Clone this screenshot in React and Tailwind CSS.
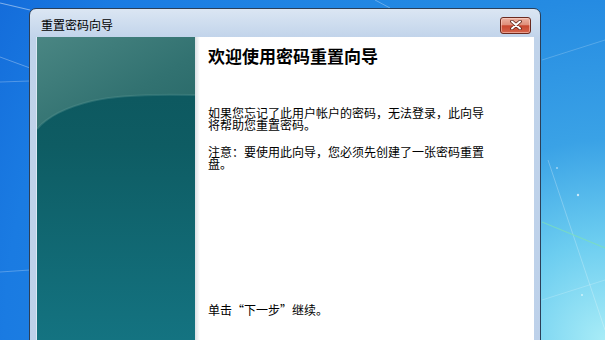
import React from "react";

const cjk = { fontFamily: '"Noto Sans CJK SC", "Noto Sans", sans-serif' };

const Desktop = () => (
  <svg className="absolute inset-0" width="605" height="340" viewBox="0 0 605 340">
    <g stroke="#ffffff" fill="none">
      <path d="M0 3 L30 10" strokeOpacity="0.45" strokeWidth="1.2" />
      <path d="M0 57 L30 68" strokeOpacity="0.3" />
      <path d="M0 82 L30 81" strokeOpacity="0.25" />
      <path d="M0 272 L30 270" strokeOpacity="0.25" />
      <path d="M375 0 L390 8" strokeOpacity="0.3" />
      <path d="M542 60 L605 40" strokeOpacity="0.2" />
      <path d="M548 160 L605 330" strokeOpacity="0.25" />
      <path d="M542 300 L605 280" strokeOpacity="0.2" />
    </g>
    <path d="M542 222 L605 248" stroke="#7ee0b8" strokeOpacity="0.7" strokeWidth="1.2" />
    <circle cx="578" cy="195" r="1.2" fill="#ffffff" fillOpacity="0.7" />
    <circle cx="582" cy="295" r="1" fill="#ffffff" fillOpacity="0.6" />
    <circle cx="557" cy="168" r="1" fill="#ffffff" fillOpacity="0.5" />
  </svg>
);

const TealArt = () => (
  <svg width="158" height="310" viewBox="0 0 158 310" className="block">
    <defs>
      <linearGradient id="deep" x1="0" y1="0" x2="0" y2="1">
        <stop offset="0" stopColor="#0c555c" />
        <stop offset="0.35" stopColor="#0e5c63" />
        <stop offset="1" stopColor="#147482" />
      </linearGradient>
      <linearGradient id="light" x1="0" y1="0" x2="1" y2="1">
        <stop offset="0" stopColor="#4a8683" />
        <stop offset="0.6" stopColor="#327271" />
        <stop offset="1" stopColor="#276868" />
      </linearGradient>
    </defs>
    <rect width="158" height="310" fill="url(#deep)" />
    <path d="M0 0 H158 V58 C120 57 80 58 55 64 C30 70 10 80 0 92 Z" fill="url(#light)" />
    <path d="M0 92 C10 80 30 70 55 64 C80 58 120 57 158 58" fill="none" stroke="#5a9491" strokeOpacity="0.35" strokeWidth="2" />
  </svg>
);

const CloseButton = () => (
  <div className="w-[31px] h-[17px] rounded-[3px] border border-[#6b2a1f] bg-[linear-gradient(#edb2a2,#df8f7b_45%,#c9472f_52%,#d4654d)] flex items-center justify-center shadow-[inset_0_0_0_1px_rgba(255,220,210,0.5)]">
    <svg width="12" height="10" viewBox="0 0 12 10">
      <path d="M2 1.5 L10 8.5 M10 1.5 L2 8.5" stroke="#5a2218" strokeWidth="3.6" strokeLinecap="round" />
      <path d="M2 1.5 L10 8.5 M10 1.5 L2 8.5" stroke="#ffffff" strokeWidth="2" strokeLinecap="round" />
    </svg>
  </div>
);

export default function App() {
  return (
    <div className="relative w-[605px] h-[340px] overflow-hidden bg-[radial-gradient(circle_at_100%_100%,#a8ecf7_0px,#6ccdf0_100px,#3aa2e6_200px,#258be2_340px,#1a7be2_600px,#1268d8_720px)]">
      <Desktop />
      <div
        className="relative ml-[29px] mt-[8px] w-[512px] h-[360px] rounded-t-[7px] border border-[#2b3f58] bg-[linear-gradient(#dbe6f3,#c0d3ea_30px,#bdd1ea)] flex flex-col"
        style={cjk}
      >
        {/* title bar */}
        <div className="h-[28px] pt-[4px] pl-[11px] pr-[9px] flex items-center justify-between">
          <span className="text-[12px] leading-[12px] text-black">重置密码向导</span>
          <CloseButton />
        </div>

        {/* client area */}
        <div className="flex flex-1 ml-[6px] mr-[6px] border-l border-[#dce8f5]">
          <div className="w-[158px] shrink-0 overflow-hidden">
            <TealArt />
          </div>
          <div className="flex-1 bg-[linear-gradient(to_right,#d9e0e4,#ffffff_5px)] pl-[13px] pt-[10px] text-black">
            <h1 className="text-[17px] leading-[17px] font-bold tracking-[0px]">欢迎使用密码重置向导</h1>
            <p className="mt-[43px] w-[282px] text-[12px] leading-[12px]">
              如果您忘记了此用户帐户的密码，无法登录，此向导将帮助您重置密码。
            </p>
            <p className="mt-[15px] w-[282px] text-[12px] leading-[12px]">
              注意：要使用此向导，您必须先创建了一张密码重置盘。
            </p>
            <p className="mt-[134px] text-[12px] leading-[12px]">单击“下一步”继续。</p>
          </div>
        </div>
      </div>
    </div>
  );
}
